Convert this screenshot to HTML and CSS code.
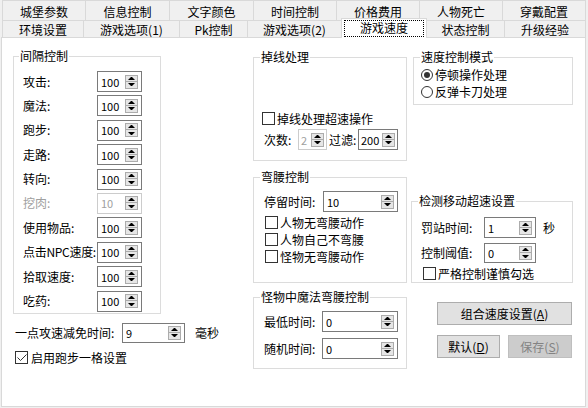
FILE: index.html
```html
<!DOCTYPE html>
<html>
<head>
<meta charset="utf-8">
<link rel="stylesheet" href="styles.css">
</head>
<body>
<div class="tabrow r1">
  <div class="tab">城堡参数</div>
  <div class="tab">信息控制</div>
  <div class="tab">文字颜色</div>
  <div class="tab">时间控制</div>
  <div class="tab">价格费用</div>
  <div class="tab">人物死亡</div>
  <div class="tab">穿戴配置</div>
</div>
<div class="tabrow r2">
  <div class="tab">环境设置</div>
  <div class="tab">游戏选项(1)</div>
  <div class="tab">Pk控制</div>
  <div class="tab">游戏选项(2)</div>
  <div class="tab sel"><span class="focus">游戏速度</span></div>
  <div class="tab">状态控制</div>
  <div class="tab">升级经验</div>
</div>
<div class="panel">
  <div class="col col-left">
    <fieldset class="grp g-interval">
      <legend class="lg-interval">间隔控制</legend>
      <div class="gb">
        <div class="frow"><span class="lbl">攻击:</span><div class="spin s45"><span class="v">100</span><span class="ud"><i class="up"></i><i class="dn"></i></span></div></div>
        <div class="frow"><span class="lbl">魔法:</span><div class="spin s45"><span class="v">100</span><span class="ud"><i class="up"></i><i class="dn"></i></span></div></div>
        <div class="frow"><span class="lbl">跑步:</span><div class="spin s45"><span class="v">100</span><span class="ud"><i class="up"></i><i class="dn"></i></span></div></div>
        <div class="frow"><span class="lbl">走路:</span><div class="spin s45"><span class="v">100</span><span class="ud"><i class="up"></i><i class="dn"></i></span></div></div>
        <div class="frow"><span class="lbl">转向:</span><div class="spin s45"><span class="v">100</span><span class="ud"><i class="up"></i><i class="dn"></i></span></div></div>
        <div class="frow"><span class="lbl dis">挖肉:</span><div class="spin s45 dis"><span class="v">10</span><span class="ud"><i class="up"></i><i class="dn"></i></span></div></div>
        <div class="frow"><span class="lbl">使用物品:</span><div class="spin s45"><span class="v">100</span><span class="ud"><i class="up"></i><i class="dn"></i></span></div></div>
        <div class="frow"><span class="lbl tight">点击NPC速度:</span><div class="spin s45"><span class="v">100</span><span class="ud"><i class="up"></i><i class="dn"></i></span></div></div>
        <div class="frow"><span class="lbl">拾取速度:</span><div class="spin s45"><span class="v">100</span><span class="ud"><i class="up"></i><i class="dn"></i></span></div></div>
        <div class="frow"><span class="lbl">吃药:</span><div class="spin s45"><span class="v">100</span><span class="ud"><i class="up"></i><i class="dn"></i></span></div></div>
      </div>
    </fieldset>
    <div class="reduce">
      <span class="lbl">一点攻速减免时间:</span>
      <div class="spin s63"><span class="v">9</span><span class="ud"><i class="up"></i><i class="dn"></i></span></div>
      <span class="unit">毫秒</span>
    </div>
    <div class="chk c-enable">
      <span class="box"><svg width="11" height="11" viewBox="0 0 11 11"><path d="M1.5 5.5 L4.5 8.5 L10.5 2.5" fill="none" stroke="#333" stroke-width="1"/></svg></span>
      <span>启用跑步一格设置</span>
    </div>
  </div>

  <div class="col col-mid">
    <fieldset class="grp g-drop">
      <legend>掉线处理</legend>
      <div class="gb">
        <div class="chk"><span class="box"></span><span>掉线处理超速操作</span></div>
        <div class="drop-row">
          <span class="lbl l-count">次数:</span>
          <div class="spin s29 dis sm"><span class="v">2</span><span class="ud"><i class="up"></i><i class="dn"></i></span></div>
          <span class="lbl l-filter">过滤:</span>
          <div class="spin s40 sm"><span class="v">200</span><span class="ud"><i class="up"></i><i class="dn"></i></span></div>
        </div>
      </div>
    </fieldset>
    <fieldset class="grp g-bend">
      <legend>弯腰控制</legend>
      <div class="gb">
        <div class="frow"><span class="lbl l-stay">停留时间:</span><div class="spin s75"><span class="v">10</span><span class="ud"><i class="up"></i><i class="dn"></i></span></div></div>
        <div class="chk-list">
          <div class="chk r17"><span class="box"></span><span>人物无弯腰动作</span></div>
          <div class="chk r17"><span class="box"></span><span>人物自己不弯腰</span></div>
          <div class="chk r17"><span class="box"></span><span>怪物无弯腰动作</span></div>
        </div>
      </div>
    </fieldset>
    <fieldset class="grp g-magic">
      <legend>怪物中魔法弯腰控制</legend>
      <div class="gb">
        <div class="frow"><span class="lbl l-min">最低时间:</span><div class="spin s76"><span class="v">0</span><span class="ud"><i class="up"></i><i class="dn"></i></span></div></div>
        <div class="frow mrow2"><span class="lbl l-min">随机时间:</span><div class="spin s76"><span class="v">0</span><span class="ud"><i class="up"></i><i class="dn"></i></span></div></div>
      </div>
    </fieldset>
  </div>

  <div class="col col-right">
    <fieldset class="grp g-mode">
      <legend>速度控制模式</legend>
      <div class="gb">
        <div class="radio"><span class="rd on"></span><span>停顿操作处理</span></div>
        <div class="radio"><span class="rd"></span><span>反弹卡刀处理</span></div>
      </div>
    </fieldset>
    <fieldset class="grp g-detect">
      <legend>检测移动超速设置</legend>
      <div class="gb">
        <div class="frow"><span class="lbl l-det">罚站时间:</span><div class="spin s52"><span class="v">1</span><span class="ud"><i class="up"></i><i class="dn"></i></span></div><span class="unit u-sec">秒</span></div>
        <div class="frow drow2"><span class="lbl l-det">控制阈值:</span><div class="spin s52 h20"><span class="v">0</span><span class="ud"><i class="up"></i><i class="dn"></i></span></div></div>
        <div class="chk c-strict"><span class="box"></span><span>严格控制谨慎勾选</span></div>
      </div>
    </fieldset>
    <div class="btn btn-main">组合速度设置(<u>A</u>)</div>
    <div class="btn-row">
      <div class="btn b-def">默认(<u>D</u>)</div>
      <div class="btn b-save dis">保存(<u>S</u>)</div>
    </div>
  </div>
</div>
</body>
</html>
```
FILE: styles.css
```css
* { box-sizing: border-box; }
html, body { margin: 0; padding: 0; }
body {
  width: 588px;
  height: 408px;
  overflow: hidden;
  background: #f0f0f0;
  font-family: "Noto Sans CJK SC", "Noto Sans", sans-serif;
  font-size: 12px;
  line-height: 14px;
  color: #000;
}

/* ---------- tabs ---------- */
.tabrow { display: flex; align-items: flex-start; margin-left: 2px; }
.tab {
  flex: none;
  border: 1px solid #d9d9d9;
  border-bottom: 0;
  margin-right: -1px;
  background: #f0f0f0;
  text-align: center;
  white-space: nowrap;
}
.r1 .tab { height: 20px; padding-top: 3px; line-height: 16px; width: 84px; }
.r1 .tab:nth-child(2), .r1 .tab:nth-child(3) { width: 85px; }

.r2 .tab { height: 17px; padding-top: 1px; line-height: 15px; }
.r2 .tab:nth-child(1) { width: 82px; }
.r2 .tab:nth-child(2) { width: 97px; }
.r2 .tab:nth-child(3) { width: 69px; }
.r2 .tab:nth-child(4) { width: 95px; }
.r2 .tab:nth-child(6) { width: 79px; }
.r2 .tab:nth-child(7) { width: 82px; }
.r2 .tab.sel {
  width: 86px;
  height: 20px;
  margin-top: -2px;
  margin-bottom: -1px;
  padding: 1px 2px 0;
  background: #fff;
  position: relative;
  z-index: 1;
}
.focus {
  display: block;
  width: 80px;
  height: 17px;
  border: 1px dotted #000;
  line-height: 13px;
}

/* ---------- panel ---------- */
.panel {
  margin-left: 1px;
  width: 585px;
  height: 370px;
  background: #fff;
  border: 1px solid #d9d9d9;
  display: flex;
  align-items: flex-start;
}
.col-left { margin: 11px 0 0 11px; width: 240px; flex: none; }
.col-mid { margin-top: 12px; width: 154px; flex: none; }
.col-right { margin: 12px 0 0 4px; width: 162px; flex: none; }

/* ---------- group boxes ---------- */
fieldset.grp {
  margin: 0;
  padding: 0;
  border: 1px solid #dcdcdc;
  min-width: 0;
}
.grp legend {
  margin-left: 6px;
  padding: 0 1px;
  line-height: 14px;
  height: 14px;
}
.grp legend.lg-interval { margin-left: 5px; }

.frow { display: flex; align-items: center; height: 21px; white-space: nowrap; }
.lbl { flex: none; white-space: nowrap; }
.lbl.dis { color: #a0a0a0; }
.lbl.tight { letter-spacing: -0.3px; }

.g-interval { width: 148px; }
.g-interval .gb { padding: 8px 0 1px 9px; }
.g-interval .frow + .frow { margin-top: 3.4px; }
.g-interval .lbl { width: 74px; }

/* ---------- spin boxes ---------- */
.spin {
  flex: none;
  display: flex;
  align-items: center;
  height: 21px;
  border: 1px solid #7a7a7a;
  background: #fff;
}
.spin.h20 { height: 20px; }
.spin .v {
  flex: 1;
  min-width: 0;
  padding-left: 3px;
  font-size: 11px;
  line-height: 14px;
  overflow: hidden;
}
.spin.sm .v { padding-left: 2px; }
.spin.dis { border-color: #cccccc; }
.spin.dis .v { color: #a0a0a0; }
.ud {
  flex: none;
  display: flex;
  flex-direction: column;
  width: 13px;
  margin-right: 3px;
}
.spin.sm .ud { margin-right: 2px; }
.ud i {
  display: flex;
  align-items: center;
  justify-content: center;
  height: 7px;
  border: 1px solid #acacac;
  background: #e6e6e6;
}
.ud i.dn { border-top: 0; }
.ud i.up::before {
  content: "";
  width: 1px;
  height: 0;
  border-left: 3px solid transparent;
  border-right: 3px solid transparent;
  border-bottom: 3px solid #000;
}
.ud i.dn::before {
  content: "";
  width: 1px;
  height: 0;
  border-left: 3px solid transparent;
  border-right: 3px solid transparent;
  border-top: 3px solid #000;
}
.s45 { width: 45px; }
.s63 { width: 63px; height: 20px; }
.s29 { width: 29px; }
.s40 { width: 40px; }
.s75 { width: 75px; }
.s76 { width: 76px; }
.s52 { width: 52px; }

/* ---------- left extras ---------- */
.reduce { display: flex; align-items: center; margin: 9px 0 0 2px; }
.reduce .lbl { width: 107px; }
.unit { margin-left: 10px; white-space: nowrap; }

.chk { display: flex; align-items: center; height: 13px; line-height: 13px; white-space: nowrap; }
.box {
  flex: none;
  width: 13px;
  height: 13px;
  border: 1px solid #333;
  background: #fff;
  margin-right: 2px;
  display: flex;
}
.box svg { display: block; }
.c-enable { margin: 8px 0 0 2px; }
.c-enable .box { margin-right: 3px; }

/* ---------- middle ---------- */
.g-drop { width: 154px; }
.g-drop .gb { padding: 48px 0 10px 8px; }
.drop-row { display: flex; align-items: center; margin: 4px 0 0 2px; }
.l-count { width: 34px; }
.l-filter { width: 29px; margin-left: 2px; }

.g-bend { width: 154px; margin-top: 9px !important; }
.g-bend .gb { padding: 7px 0 17px 10px; }
.l-stay { width: 59px; }
.chk-list { margin-top: 2px; }
.chk.r17 { height: 17px; margin-left: 1px; }

.g-magic { width: 154px; margin-top: 7px !important; }
.g-magic .gb { padding: 7px 0 9px 10px; }
.l-min { width: 58px; }
.mrow2 { margin-top: 6px; }

/* ---------- right ---------- */
.g-mode { width: 160px; margin-left: 2px !important; }
.g-mode .gb { padding: 2px 0 4px 7px; }
.radio { display: flex; align-items: center; height: 17px; white-space: nowrap; }
.rd {
  flex: none;
  width: 12px;
  height: 12px;
  border: 1px solid #333;
  border-radius: 50%;
  background: #fff;
  margin-right: 2px;
  display: flex;
  align-items: center;
  justify-content: center;
}
.rd.on::after {
  content: "";
  width: 6px;
  height: 6px;
  border-radius: 50%;
  background: #333;
}

.g-detect { width: 162px; margin-top: 89px !important; }
.g-detect .gb { padding: 9px 0 2px 9px; }
.l-det { width: 63px; }
.u-sec { margin-left: 7px; }
.drow2 { margin-top: 5px; height: 20px; }
.c-strict { margin: 4px 0 0 2px; }

.btn {
  display: flex;
  align-items: center;
  justify-content: center;
  height: 23px;
  border: 1px solid #adadad;
  background: #e1e1e1;
  white-space: nowrap;
}
.btn u { text-underline-offset: 1px; }
.btn.dis { background: #cccccc; border-color: #bfbfbf; color: #838383; }
.btn-main { margin: 19px 0 0 26px; width: 135px; }
.btn-row { display: flex; gap: 8px; margin: 10px 0 0 26px; }
.b-def { width: 63px; }
.b-save { width: 64px; }
```
